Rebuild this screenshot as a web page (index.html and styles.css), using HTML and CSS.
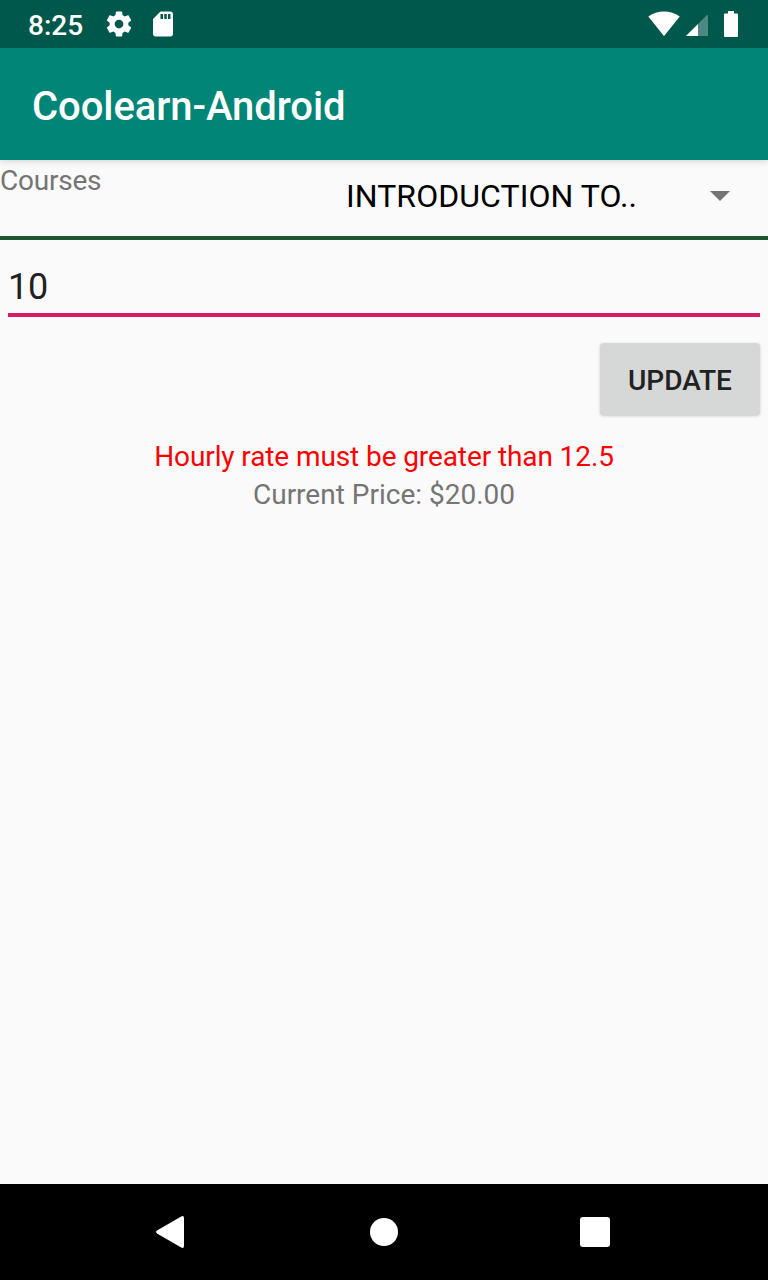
FILE: index.html
```html
<!DOCTYPE html>
<html lang="en">
<head>
<meta charset="utf-8">
<title>Coolearn-Android</title>
<link rel="stylesheet" href="styles.css">
</head>
<body>
<div class="screen">
  <div class="status-bar">
    <span class="clock">8:25</span>
    <svg class="gear" width="30" height="30" viewBox="0 0 24 24"><path d="M19.43 12.98c.04-.32.07-.64.07-.98s-.03-.66-.07-.98l2.11-1.65c.19-.15.24-.42.12-.64l-2-3.46c-.12-.22-.39-.3-.61-.22l-2.49 1c-.52-.4-1.08-.73-1.69-.98l-.38-2.65C14.46 2.18 14.25 2 14 2h-4c-.25 0-.46.18-.49.42l-.38 2.65c-.61.25-1.17.59-1.69.98l-2.49-1c-.23-.09-.49 0-.61.22l-2 3.46c-.13.22-.07.49.12.64l2.11 1.65c-.04.32-.07.65-.07.98s.03.66.07.98l-2.11 1.65c-.19.15-.24.42-.12.64l2 3.46c.12.22.39.3.61.22l2.49-1c.52.4 1.08.73 1.69.98l.38 2.65c.03.24.24.42.49.42h4c.25 0 .46-.18.49-.42l.38-2.65c.61-.25 1.17-.59 1.69-.98l2.49 1c.23.09.49 0 .61-.22l2-3.46c.12-.22.07-.49-.12-.64l-2.11-1.65zM12 15.500c-1.930 0-3.500-1.570-3.500-3.500s1.570-3.500 3.500-3.500 3.500 1.570 3.500 3.500-1.570 3.500-3.500 3.500z"/></svg>
    <svg class="sd-card" width="30" height="30" viewBox="0 0 24 24"><path d="M18 2h-8L4.020 8 4 20c0 1.100.9 2 2 2h12c1.100 0 2-.9 2-2V4c0-1.100-.9-2-2-2zm-6 6h-2V4h2v4zm3 0h-2V4h2v4zm3 0h-2V4h2v4z"/></svg>
    <svg class="wifi" width="32" height="26" viewBox="0 0 32 26"><path d="M.3 5.500C5 2 10 .6 16 .6S27 2 31.800 5.500L16.700 24.200Q16 25.200 15.300 24.200Z"/></svg>
    <svg class="signal" width="22" height="22" viewBox="0 0 22 22"><path class="dim" d="M12 10L20.500 1.500Q22 .2 22 1.500V22H12Z"/><path d="M12 10V22H.8Q-.3 22 .6 21.200Z"/></svg>
    <svg class="battery" width="14" height="26" viewBox="0 0 14 26"><path d="M4 0h6v2.500h3q1 0 1 1V25q0 1-1 1H1q-1 0-1-1V3.500q0-1 1-1h3z"/></svg>
  </div>
  <header class="app-bar"><h1 class="title">Coolearn-Android</h1></header>
  <main class="content">
    <div class="course-row">
      <span class="label">Courses</span>
      <div class="spinner">
        <span class="selected">INTRODUCTION TO..</span>
        <svg class="caret" width="20" height="10" viewBox="0 0 20 10"><path d="M0 0H20L10 10Z"/></svg>
      </div>
    </div>
    <div class="rate-field">10</div>
    <button class="update" type="button">UPDATE</button>
    <p class="message error">Hourly rate must be greater than 12.5</p>
    <p class="message">Current Price: $20.00</p>
  </main>
  <nav class="nav-bar">
    <svg class="back" width="28" height="32" viewBox="0 0 28 32"><path d="M25.200.4Q28-.8 28 2V30Q28 32.800 25.200 31.600L1 17.600Q-.8 16 1 14.400Z"/></svg>
    <svg class="home" width="28" height="28" viewBox="0 0 28 28"><circle cx="14" cy="14" r="14"/></svg>
    <svg class="recent" width="30" height="30" viewBox="0 0 30 30"><rect width="30" height="30" rx="3"/></svg>
  </nav>
</div>
</body>
</html>
```
FILE: styles.css
```css
* { box-sizing: border-box; }
body { margin: 0; font-family: Roboto, sans-serif; background: #fafafa; }
svg { display: block; fill: #fff; flex: none; }
.screen { width: 768px; height: 1280px; display: flex; flex-direction: column; overflow: hidden; }
.status-bar { height: 48px; flex: none; display: flex; align-items: flex-start; padding-left: 28px; background: #00574b; position: relative; z-index: 2; }
.clock { width: 76px; font-size: 28px; font-weight: 500; line-height: 33px; margin-top: 9px; color: #fff; }
.gear { margin-top: 9px; }
.sd-card { margin: 9px 0 0 14px; }
.wifi { margin: 11px 0 0 470px; }
.signal { margin: 14px 0 0 6px; }
.signal .dim { fill: #4d8981; }
.battery { margin: 11px 0 0 16px; }
.app-bar { height: 112px; flex: none; display: flex; align-items: center; padding: 6px 32px 0; background: #008577; box-shadow: 0 1px 7px rgba(0, 0, 0, .17); z-index: 1; }
.title { margin: 0; font-size: 40px; font-weight: 500; line-height: 48px; letter-spacing: -.08px; color: #fff; }
.content { flex: 1; display: flex; flex-direction: column; }
.course-row { height: 80px; display: flex; justify-content: space-between; border-bottom: 4px solid #1b5631; }
.label { padding-top: 4px; font-size: 28px; line-height: 33px; letter-spacing: -.22px; color: #757575; }
.spinner { width: 422px; height: 72px; padding-right: 38px; display: flex; align-items: center; justify-content: space-between; }
.selected { font-size: 32px; line-height: 38px; letter-spacing: .06px; color: #000; }
.caret { fill: #757575; }
.rate-field { margin: 20px 8px 0; height: 57px; padding-top: 6px; border-bottom: 4px solid #d81b60; font-size: 36px; line-height: 42px; letter-spacing: -.2px; color: #212121; }
.update { align-self: flex-end; width: 160px; height: 72px; margin: 26px 8px 0 0; padding: 2px 0 0; border: 0; border-radius: 4px; background: #d6d7d7; color: #212121; font: 500 28px/33px Roboto, sans-serif; box-shadow: 0 1px 3px rgba(0, 0, 0, .2); }
.message { margin: 5px 0 0; font-size: 28px; line-height: 33px; text-align: center; color: #757575; }
.message.error { margin-top: 25px; letter-spacing: -.1px; color: #f00; }
.nav-bar { height: 96px; flex: none; display: flex; align-items: center; background: #000; }
.back { margin-left: 156px; }
.home { margin-left: 186px; }
.recent { margin-left: 182px; }
```
